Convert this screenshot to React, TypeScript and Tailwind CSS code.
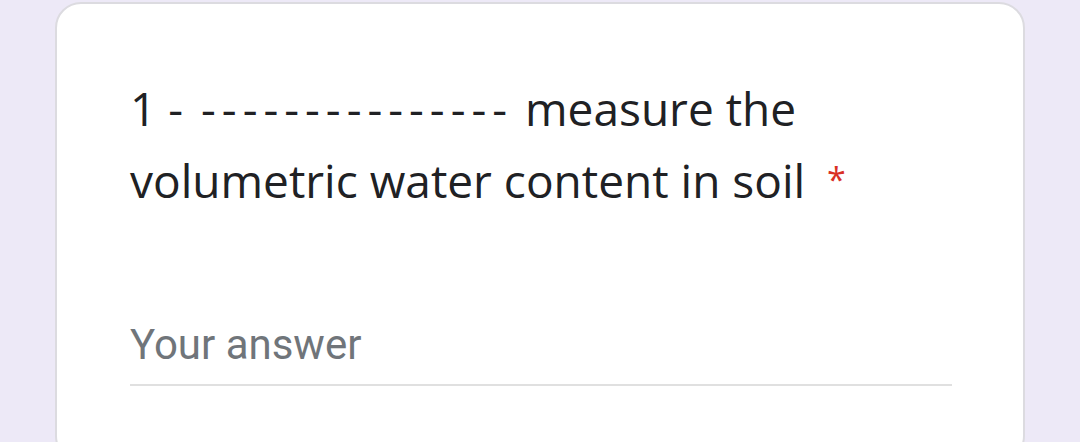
export default function App() {
  return (
    <div className="w-[1080px] h-[442px] overflow-hidden bg-[#ede9f7] pl-[55px] pr-[55px] pt-[2px]">
      <div className="h-[460px] rounded-[26px] border-2 border-[#dcdbe0] bg-white pl-[73px] pr-[72px] pt-[68px]">
        <p className="text-[46px] leading-[72px] text-[#202124] font-['Open_Sans',sans-serif] w-[720px]">
          1 <span className="tracking-[6px]">-</span> <span className="tracking-[6px]">---------------</span> measure the volumetric water content in soil{' '}
          <span className="inline-block align-top text-[#d93025] text-[34px] leading-[70px] ml-[10px]">*</span>
        </p>
        <div className="mt-[104px] w-[822px] border-b-2 border-[#e0e0e0] pb-[14px]">
          <div className="text-[42px] leading-[50px] text-[#70757a] font-['Roboto',sans-serif]">Your answer</div>
        </div>
      </div>
    </div>
  );
}
